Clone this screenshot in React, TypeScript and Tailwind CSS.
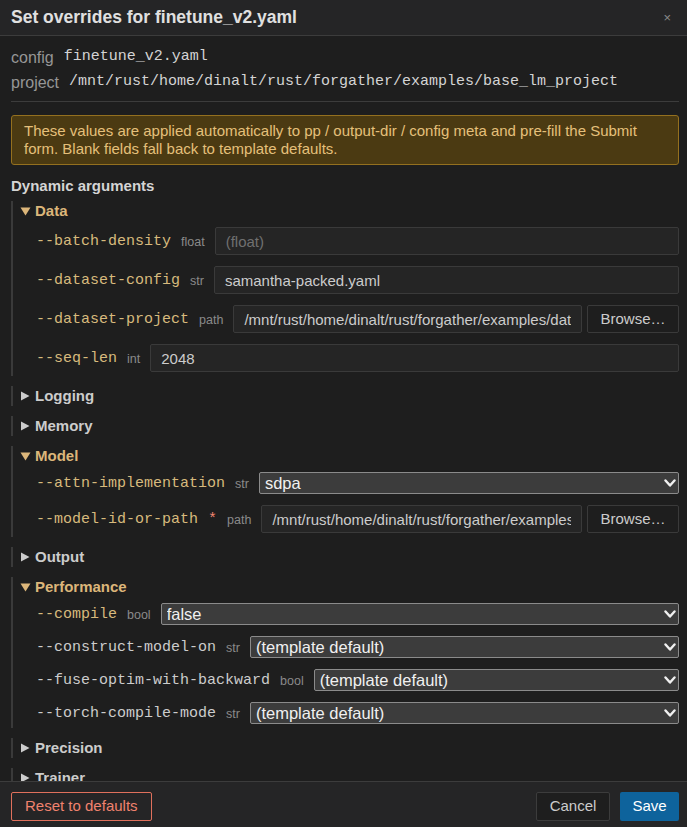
import React from 'react';

type Arg = {
    name: string;
    type: string;
    kind: 'input' | 'path' | 'select';
    value?: string;
    placeholder?: string;
    set?: boolean;
    required?: boolean;
};

type Group = {
    title: string;
    open: boolean;
    args?: Arg[];
};

const groups: Group[] = [
    {
        title: 'Data',
        open: true,
        args: [
            { name: '--batch-density', type: 'float', kind: 'input', placeholder: '(float)', set: true },
            { name: '--dataset-config', type: 'str', kind: 'input', value: 'samantha-packed.yaml', set: true },
            { name: '--dataset-project', type: 'path', kind: 'path', value: '/mnt/rust/home/dinalt/rust/forgather/examples/dataset_project', set: true },
            { name: '--seq-len', type: 'int', kind: 'input', value: '2048', set: true },
        ],
    },
    { title: 'Logging', open: false },
    { title: 'Memory', open: false },
    {
        title: 'Model',
        open: true,
        args: [
            { name: '--attn-implementation', type: 'str', kind: 'select', value: 'sdpa', set: true },
            { name: '--model-id-or-path', type: 'path', kind: 'path', value: '/mnt/rust/home/dinalt/rust/forgather/examples/models', set: true, required: true },
        ],
    },
    { title: 'Output', open: false },
    {
        title: 'Performance',
        open: true,
        args: [
            { name: '--compile', type: 'bool', kind: 'select', value: 'false', set: true },
            { name: '--construct-model-on', type: 'str', kind: 'select', value: '(template default)' },
            { name: '--fuse-optim-with-backward', type: 'bool', kind: 'select', value: '(template default)' },
            { name: '--torch-compile-mode', type: 'str', kind: 'select', value: '(template default)' },
        ],
    },
    { title: 'Precision', open: false },
    { title: 'Trainer', open: false },
];

const Caret: React.FC<{ open: boolean }> = ({ open }) =>
    open ? (
        <svg width="11" height="10" viewBox="0 0 11 10" className="mr-[4px] shrink-0">
            <path d="M0.5 1.5 L10.5 1.5 L5.5 9.5 Z" fill="#dcb67a" />
        </svg>
    ) : (
        <svg width="11" height="10" viewBox="0 0 11 10" className="mr-[4px] shrink-0">
            <path d="M1 0.5 L9.5 5 L1 9.5 Z" fill="#cccccc" />
        </svg>
    );

const ArgRow: React.FC<{ arg: Arg }> = ({ arg }) => (
    <div className="flex items-center gap-[10px] pl-[16px]">
        <span
            className={`pt-[2px] font-['Liberation_Mono',monospace] text-[15px] leading-[18px] whitespace-nowrap ${arg.set ? 'text-[#d7ba7d]' : 'text-[#cccccc]'}`}
        >
            {arg.name}
            {arg.required && <span className="ml-[10px] text-[#f48771]">*</span>}
        </span>
        <span className="pt-[1px] text-[12.5px] leading-[16px] text-[#8a8a8a] whitespace-nowrap">{arg.type}</span>
        {arg.kind === 'select' ? (
            <div className="relative flex-1 min-w-0">
                <select
                    defaultValue={arg.value}
                    className="block w-full h-[22px] appearance-none rounded-[2px] border border-[#8b8b8b] bg-[#3c3c3c] pl-[5px] pr-6 text-[16.5px] leading-[20px] text-[#f0f0f0] outline-none"
                >
                    <option>{arg.value}</option>
                </select>
                {/* chevron over native select */}
                <svg width="12" height="9" viewBox="0 0 12 9" className="pointer-events-none absolute right-[3px] top-[7px]">
                    <path d="M1.5 1.5 L6 6.5 L10.5 1.5" fill="none" stroke="#f0f0f0" strokeWidth="2.4" strokeLinecap="round" strokeLinejoin="round" />
                </svg>
            </div>
        ) : (
            <div className="flex flex-1 min-w-0 gap-[5px]">
                <input
                    defaultValue={arg.value}
                    placeholder={arg.placeholder}
                    className="block h-[28px] flex-1 min-w-0 rounded-[2px] border border-[#3a3a3a] bg-[#252525] px-[10px] text-[15px] text-[#cccccc] placeholder:text-[#707070] outline-none"
                />
                {arg.kind === 'path' && (
                    <button className="h-[28px] w-[92px] shrink-0 rounded-[2px] border border-[#3a3a3a] bg-[#1e1e1e] text-[15px] text-[#cccccc]">
                        Browse…
                    </button>
                )}
            </div>
        )}
    </div>
);

const GroupBlock: React.FC<{ group: Group }> = ({ group }) => (
    <div className={`border-l-2 border-[#3a3a3a] pl-[7px] ${group.open ? 'pb-[4px]' : ''}`}>
        <div className="flex h-[20px] items-center">
            <Caret open={group.open} />
            <span className={`text-[15px] font-bold leading-[20px] ${group.open ? 'text-[#dcb67a]' : 'text-[#cccccc]'}`}>{group.title}</span>
        </div>
        {group.open && group.args && (
            <div className="mt-[6px] flex flex-col gap-[11px]">
                {group.args.map((a) => (
                    <ArgRow key={a.name} arg={a} />
                ))}
            </div>
        )}
    </div>
);

export default function App() {
    return (
        <div className="flex h-[827px] w-[687px] flex-col overflow-hidden bg-[#1e1e1e] font-['Liberation_Sans',Arial,sans-serif] text-[#cccccc]">
            {/* Header */}
            <div className="flex h-[36px] shrink-0 items-center justify-between border-b border-[#3c3c3c] bg-[#252526] pl-[11px] pr-[16px]">
                <h2 className="text-[17.5px] font-bold text-[#e0e0e0]">Set overrides for finetune_v2.yaml</h2>
                <span className="text-[13px] text-[#8a8a8a]">×</span>
            </div>

            {/* Body */}
            <div className="flex-1 overflow-hidden pl-[11px] pr-[8px] pt-[9px]">
                <div className="flex h-[25px] items-center gap-[10px]">
                    <span className="text-[16px] text-[#969696]">config</span>
                    <span className="font-['Liberation_Mono',monospace] text-[15px] text-[#d4d4d4]">finetune_v2.yaml</span>
                </div>
                <div className="flex h-[25px] items-center gap-[10px]">
                    <span className="text-[16px] text-[#969696]">project</span>
                    <span className="font-['Liberation_Mono',monospace] text-[15px] text-[#d4d4d4]">/mnt/rust/home/dinalt/rust/forgather/examples/base_lm_project</span>
                </div>
                <div className="mt-[6px] border-t border-[#3c3c3c]" />

                <div className="mt-[13px] rounded-[3px] border border-[#94701f] bg-[#4b3a12] px-[12px] py-[6px] text-[15px] leading-[18px] text-[#e5c07b]">
                    These values are applied automatically to pp / output-dir / config meta and pre-fill the Submit form. Blank fields fall back to template defaults.
                </div>

                <div className="mt-[11px] mb-[5px] text-[15px] font-bold leading-[20px] text-[#d4d4d4]">Dynamic arguments</div>

                <div className="flex flex-col gap-[10px]">
                    {groups.map((g) => (
                        <GroupBlock key={g.title} group={g} />
                    ))}
                </div>
            </div>

            {/* Footer */}
            <div className="flex h-[46px] shrink-0 items-start border-t border-[#3c3c3c] bg-[#252526] pl-[11px] pr-[8px] pt-[10px]">
                <button className="h-[29px] shrink-0 whitespace-nowrap rounded-[2px] border border-[#e0705c] px-[13px] text-[15px] text-[#f0826e]">Reset to defaults</button>
                <div className="ml-auto flex gap-[10px]">
                    <button className="h-[29px] w-[74px] rounded-[2px] border border-[#3c3c3c] bg-[#1e1e1e] text-[15px] text-[#cccccc]">Cancel</button>
                    <button className="h-[29px] w-[59px] rounded-[2px] bg-[#0e639c] text-[15px] text-white">Save</button>
                </div>
            </div>
        </div>
    );
}
